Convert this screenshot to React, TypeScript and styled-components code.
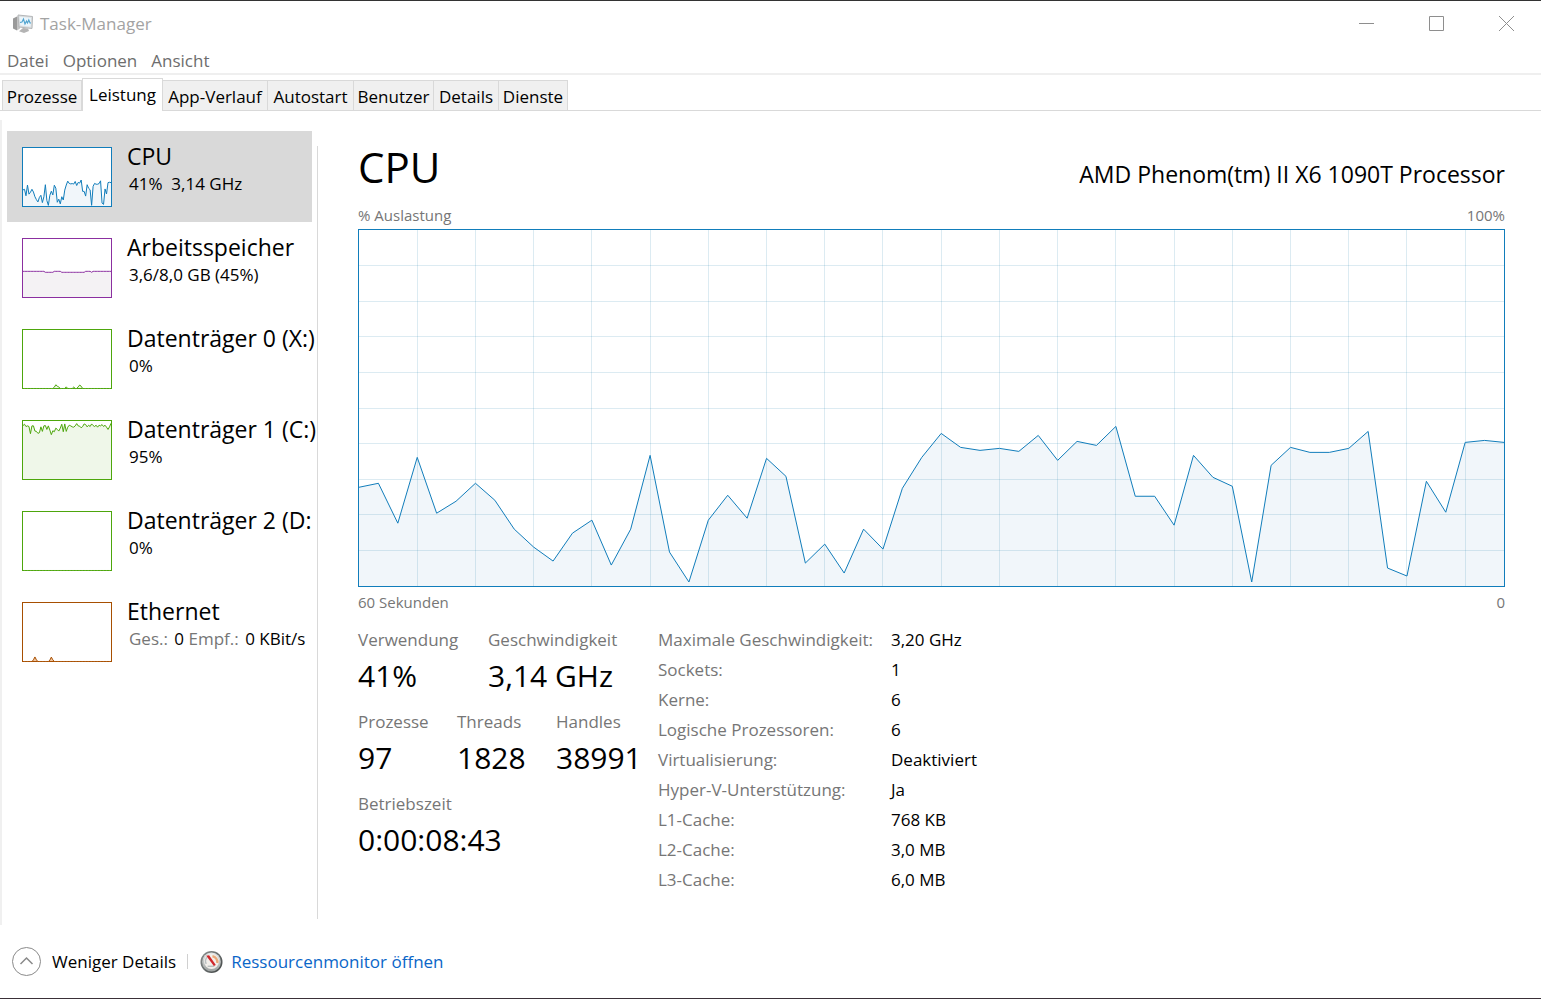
import React from "react";
import styled, { createGlobalStyle } from "styled-components";

const GlobalStyle = createGlobalStyle`
  *, *::before, *::after { box-sizing: border-box; }
  body {
    margin: 0;
    background: #fff;
    color: #000;
    font-family: "Open Sans", "Noto Sans", sans-serif;
    font-size: 17px;
  }
  button { font: inherit; color: inherit; background: none; border: 0; padding: 0; margin: 0; }
  h1, h2, p, dl, dt, dd { margin: 0; font-weight: 400; }
`;

const Window = styled.div`
  display: flex;
  flex-direction: column;
  min-height: 100vh;
  border-top: 1px solid #333;
  border-bottom: 1px solid #3a3038;
`;

const TitleBar = styled.header`
  display: flex;
  align-items: center;
  height: 45px;
  padding-left: 12px;
  gap: 6px;
  color: #a3a3a3;
`;

const WindowTitle = styled.span`
  flex: 1;
  line-height: 24px;
`;

const WindowControls = styled.div`
  display: flex;
`;

const WindowButton = styled.button`
  display: flex;
  align-items: center;
  justify-content: center;
  width: 70px;
  height: 44px;
`;

const MenuBar = styled.nav`
  display: flex;
  gap: 14px;
  height: 29px;
  padding: 2px 7px 0;
  border-bottom: 2px solid #efefef;
  color: #6d6d6d;
`;

const MenuButton = styled.button`
  line-height: 24px;
`;

const TabStrip = styled.div`
  display: flex;
  align-items: flex-end;
  height: 36px;
  padding-left: 2px;
  border-bottom: 1px solid #d9d9d9;
`;

const Tab = styled.button<{ $width: number; $active?: boolean }>`
  width: ${(p) => p.$width}px;
  height: ${(p) => (p.$active ? 33 : 30)}px;
  margin-bottom: ${(p) => (p.$active ? -1 : 0)}px;
  padding-top: ${(p) => (p.$active ? 0 : 2)}px;
  border: 1px solid #d9d9d9;
  border-bottom: 0;
  border-left-width: ${(p) => (p.$active ? 1 : 0)}px;
  background: ${(p) => (p.$active ? "#fff" : "#f0f0f0")};
  line-height: 24px;
  white-space: nowrap;
  &:first-child { border-left-width: 1px; }
`;

const Content = styled.main`
  display: flex;
  flex: 1;
  margin-top: 9px;
  border-left: 2px solid #f0f0f0;
`;

const Sidebar = styled.aside`
  flex: 0 0 316px;
  display: flex;
  padding: 11px 0 6px 5px;
`;

const DeviceList = styled.div`
  width: 305px;
`;

const Divider = styled.div`
  width: 1px;
  margin: 15px 0 0 5px;
  background: #d9d9d9;
`;

const DeviceItem = styled.button<{ $active?: boolean }>`
  display: flex;
  align-items: flex-start;
  gap: 15px;
  width: 100%;
  height: 91px;
  padding: 16px 0 0 15px;
  text-align: left;
  background: ${(p) => (p.$active ? "#d9d9d9" : "transparent")};
`;

const DeviceText = styled.span`
  display: flex;
  flex-direction: column;
  margin-top: -6px;
  white-space: nowrap;
`;

const DeviceName = styled.span`
  font-size: 23px;
  line-height: 30px;
`;

const DeviceInfo = styled.span`
  padding-left: 2px;
  font-size: 17px;
  line-height: 26px;
  white-space: pre;
`;

const Muted = styled.span`
  margin-right: 2px;
  color: #767676;
`;

const Plot = styled.span<{ $color: string; $large?: boolean }>`
  display: block;
  position: relative;
  flex: ${(p) => (p.$large ? "1 0 240px" : "none")};
  width: ${(p) => (p.$large ? "auto" : "90px")};
  height: ${(p) => (p.$large ? "auto" : "60px")};
  border: 1px solid ${(p) => p.$color};
  background: #fff;
  svg {
    position: absolute;
    inset: 0;
    width: 100%;
    height: 100%;
    display: block;
    overflow: visible;
  }
`;

const Panel = styled.section`
  flex: 1;
  display: flex;
  flex-direction: column;
  min-width: 0;
  padding: 18px 36px 30px 40px;
`;

const PanelHead = styled.div`
  display: flex;
  justify-content: space-between;
  align-items: baseline;
  height: 66px;
`;

const Heading = styled.h1`
  font-size: 42px;
  line-height: 58px;
`;

const Model = styled.h2`
  font-size: 23px;
  line-height: 30px;
`;

const AxisRow = styled.div`
  display: flex;
  justify-content: space-between;
  height: 25px;
  font-size: 15px;
  line-height: 22px;
  color: #767676;
`;

const AxisFooter = styled(AxisRow)`
  height: 38px;
  line-height: 30px;
`;

const Figures = styled.div`
  display: grid;
  grid-template-columns: 300px 1fr;
`;

const StatRows = styled.div`
  display: flex;
  flex-direction: column;
  gap: 10px;
`;

const StatRow = styled.dl<{ $column: number }>`
  display: grid;
  grid-auto-flow: column;
  grid-auto-columns: ${(p) => p.$column}px;
`;

const StatLabel = styled.dt`
  font-size: 17px;
  line-height: 30px;
  color: #767676;
`;

const StatValue = styled.dd`
  font-size: 30px;
  line-height: 42px;
  white-space: nowrap;
`;

const SpecTable = styled.table`
  border-collapse: collapse;
  justify-self: start;
  align-self: start;
  font-size: 17px;
  line-height: 30px;
  th {
    width: 233px;
    padding: 0;
    font-weight: 400;
    text-align: left;
    color: #767676;
  }
  td { padding: 0; }
`;

const Footer = styled.footer`
  display: flex;
  align-items: center;
  height: 73px;
  padding: 0 12px;
`;

const FewerButton = styled.button`
  display: flex;
  align-items: center;
  gap: 11px;
`;

const FooterRule = styled.span`
  width: 1px;
  height: 15px;
  margin: 0 12px 0 11px;
  background: #d0d0d0;
`;

const MonitorLink = styled.a`
  display: flex;
  align-items: center;
  gap: 8px;
  color: #0a66c8;
  text-decoration: none;
`;

/* Depth of each sample below the top edge, on a scale of 357. */
const cpu = [
  258, 254, 294, 228, 284, 272, 254, 271, 300, 318, 332, 304, 291, 336, 300, 226, 323, 353, 291, 266,
  289, 229, 247, 334, 315, 344, 300, 320, 259, 228, 204, 218, 221, 219, 222, 206, 231, 212, 216, 197,
  267, 267, 296, 226, 248, 257, 353, 236, 218, 223, 223, 219, 202, 339, 347, 252, 283, 213, 211, 213,
];
const memory = Array.from({ length: 60 }, (_, i) =>
  (i > 14 && i < 21) || (i > 25 && i < 42) || i === 46 ? 205 : 199
);
/* An idle device draws its line on the bottom border itself. */
const idle = Array.from({ length: 60 }, () => 360);
const spikes = (at: Record<number, number>) => idle.map((v, i) => at[i] ?? v);
const diskX = spikes({ 21: 352, 22: 337, 23: 346, 24: 351, 29: 350, 34: 351, 37: 350, 38: 339, 39: 346 });
const ethernet = spikes({ 7: 350, 8: 332, 9: 350, 18: 352, 19: 333, 20: 350 });
const diskC = [
  28, 20, 34, 30, 34, 78, 30, 30, 62, 64, 76, 72, 36, 64, 30, 28, 52, 30, 56, 84,
  60, 66, 44, 52, 62, 44, 20, 66, 18, 64, 38, 26, 30, 36, 38, 30, 16, 30, 32, 42,
  34, 18, 22, 36, 26, 34, 18, 28, 34, 26, 38, 26, 30, 22, 34, 26, 38, 52, 36, 14,
];

type GraphProps = { data: number[]; color: string; fill: string; large?: boolean };

function Graph({ data, color, fill, large }: GraphProps) {
  const line = data.map((y, x) => `${x},${y}`).join(" ");
  return (
    <Plot $color={color} $large={large}>
      <svg viewBox="0 0 59 357" preserveAspectRatio="none" aria-hidden="true">
        <polygon points={`0,357 ${line} 59,357`} fill={fill} />
        {large && (
          <g stroke="#1177aa" strokeOpacity="0.15" shapeRendering="crispEdges">
            {Array.from({ length: 19 }, (_, i) => (
              <line key={`v${i}`} x1={(i + 1) * 3} x2={(i + 1) * 3} y1="0" y2="357" vectorEffect="non-scaling-stroke" />
            ))}
            {Array.from({ length: 9 }, (_, i) => (
              <line key={`h${i}`} x1="0" x2="59" y1={(i + 1) * 35.7} y2={(i + 1) * 35.7} vectorEffect="non-scaling-stroke" />
            ))}
          </g>
        )}
        <polyline points={line} fill="none" stroke={color} strokeWidth="1" vectorEffect="non-scaling-stroke" />
      </svg>
    </Plot>
  );
}

const AppIcon = () => (
  <svg width="22" height="20" viewBox="0 0 22 20" aria-hidden="true">
    <path d="M1 4.500 5 2.500v14l-4-2z" fill="#9a9a9a" />
    <path d="M5 2.500l3-1v13l-3 2z" fill="#c4c4c4" />
    <path d="M6 1 20.500 2.500 20 14.500 7 13z" fill="#dcdedf" stroke="#b4b7b9" />
    <path d="M7.500 2.800 19 3.800 18.600 12.800 8.300 11.600z" fill="#eaf5fb" />
    <path d="M8 8.500l2-.5 1.500-3 1.500 5 1.500-3 1 2 1.300-3 1.200 3h1" fill="none" stroke="#4fa3cf" strokeWidth="1.100" />
    <path d="M11 14l5 .6 1 2.400-5 2-5-1.800z" fill="#b4b4b4" />
  </svg>
);

const GaugeIcon = () => (
  <svg width="23" height="24" viewBox="0 0 24 24" aria-hidden="true">
    <defs>
      <linearGradient id="rim" x1="0" y1="0" x2="1" y2="1">
        <stop offset="0" stopColor="#8d9291" />
        <stop offset="0.6" stopColor="#5f6464" />
        <stop offset="1" stopColor="#3c4040" />
      </linearGradient>
      <linearGradient id="bezel" x1="0" y1="0" x2="0" y2="1">
        <stop offset="0" stopColor="#e6e9e8" />
        <stop offset="1" stopColor="#9da2a1" />
      </linearGradient>
    </defs>
    <circle cx="12" cy="12" r="11.500" fill="url(#rim)" />
    <circle cx="12" cy="12" r="9.800" fill="url(#bezel)" />
    <circle cx="12" cy="11.500" r="7.800" fill="#f2eeea" />
    <path d="M6.500 14a6 6 0 0 1 1-7" fill="none" stroke="#b9bfc0" strokeWidth="1.500" />
    <path d="M13 6a6 6 0 0 1 5 7" fill="none" stroke="#e9a878" strokeWidth="2.500" />
    <path d="M8 16.500h7" stroke="#b8bdbd" strokeWidth="1.500" />
    <path d="M6.500 5.500 9.500 5l7 10-2 1.200z" fill="#d0262b" />
  </svg>
);

const tabs = [
  { label: "Prozesse", width: 80 },
  { label: "Leistung", width: 81 },
  { label: "App-Verlauf", width: 105 },
  { label: "Autostart", width: 86 },
  { label: "Benutzer", width: 80 },
  { label: "Details", width: 65 },
  { label: "Dienste", width: 69 },
];

const specs = [
  ["Maximale Geschwindigkeit:", "3,20 GHz"],
  ["Sockets:", "1"],
  ["Kerne:", "6"],
  ["Logische Prozessoren:", "6"],
  ["Virtualisierung:", "Deaktiviert"],
  ["Hyper-V-Unterstützung:", "Ja"],
  ["L1-Cache:", "768 KB"],
  ["L2-Cache:", "3,0 MB"],
  ["L3-Cache:", "6,0 MB"],
];

const statRows = [
  { column: 130, stats: [["Verwendung", "41%"], ["Geschwindigkeit", "3,14 GHz"]] },
  { column: 99, stats: [["Prozesse", "97"], ["Threads", "1828"], ["Handles", "38991"]] },
  { column: 200, stats: [["Betriebszeit", "0:00:08:43"]] },
];

const devices = [
  { name: "CPU", info: "41%  3,14 GHz", data: cpu, color: "#117dbb", fill: "#f1f6fa" },
  { name: "Arbeitsspeicher", info: "3,6/8,0 GB (45%)", data: memory, color: "#8b2fa0", fill: "#f4f2f4" },
  { name: "Datenträger 0 (X:)", info: "0%", data: diskX, color: "#4da60c", fill: "#eff7e9" },
  { name: "Datenträger 1 (C:)", info: "95%", data: diskC, color: "#4da60c", fill: "#eff7e9" },
  { name: "Datenträger 2 (D:", info: "0%", data: idle, color: "#4da60c", fill: "#eff7e9" },
  {
    name: "Ethernet",
    info: (
      <>
        <Muted>Ges.:</Muted> 0 <Muted>Empf.:</Muted> 0 KBit/s
      </>
    ),
    data: ethernet,
    color: "#a74f01",
    fill: "#f3c8a4",
  },
];

export default function App() {
  return (
    <Window>
      <GlobalStyle />
      <TitleBar>
        <AppIcon />
        <WindowTitle>Task-Manager</WindowTitle>
        <WindowControls>
          <WindowButton aria-label="Minimieren">
            <svg width="15" height="15" stroke="#8e8e8e"><path d="M0 7.500h15" /></svg>
          </WindowButton>
          <WindowButton aria-label="Maximieren">
            <svg width="15" height="15" stroke="#8e8e8e" fill="none"><path d="M.5.5h14v14H.5z" /></svg>
          </WindowButton>
          <WindowButton aria-label="Schließen">
            <svg width="15" height="15" stroke="#8e8e8e"><path d="M0 0l15 15M15 0 0 15" /></svg>
          </WindowButton>
        </WindowControls>
      </TitleBar>
      <MenuBar>
        <MenuButton>Datei</MenuButton>
        <MenuButton>Optionen</MenuButton>
        <MenuButton>Ansicht</MenuButton>
      </MenuBar>
      <TabStrip role="tablist">
        {tabs.map((t) => (
          <Tab key={t.label} role="tab" aria-selected={t.label === "Leistung"} $width={t.width} $active={t.label === "Leistung"}>
            {t.label}
          </Tab>
        ))}
      </TabStrip>
      <Content>
        <Sidebar>
          <DeviceList>
            {devices.map((d, i) => (
              <DeviceItem key={d.name} $active={i === 0}>
                <Graph data={d.data} color={d.color} fill={d.fill} />
                <DeviceText>
                  <DeviceName>{d.name}</DeviceName>
                  <DeviceInfo>{d.info}</DeviceInfo>
                </DeviceText>
              </DeviceItem>
            ))}
          </DeviceList>
          <Divider />
        </Sidebar>
        <Panel>
          <PanelHead>
            <Heading>CPU</Heading>
            <Model>AMD Phenom(tm) II X6 1090T Processor</Model>
          </PanelHead>
          <AxisRow>
            <span>% Auslastung</span>
            <span>100%</span>
          </AxisRow>
          <Graph data={cpu} color="#117dbb" fill="#f1f6fa" large />
          <AxisFooter>
            <span>60 Sekunden</span>
            <span>0</span>
          </AxisFooter>
          <Figures>
            <StatRows>
              {statRows.map((row) => (
                <StatRow key={row.column} $column={row.column}>
                  {row.stats.map(([label, value]) => (
                    <div key={label}>
                      <StatLabel>{label}</StatLabel>
                      <StatValue>{value}</StatValue>
                    </div>
                  ))}
                </StatRow>
              ))}
            </StatRows>
            <SpecTable>
              <tbody>
                {specs.map(([label, value]) => (
                  <tr key={label}>
                    <th scope="row">{label}</th>
                    <td>{value}</td>
                  </tr>
                ))}
              </tbody>
            </SpecTable>
          </Figures>
        </Panel>
      </Content>
      <Footer>
        <FewerButton>
          <svg width="29" height="29" fill="none" stroke="#8a8a8a" aria-hidden="true">
            <circle cx="14.500" cy="14.500" r="14" />
            <path d="M8.500 17l6-6 6 6" strokeWidth="1.500" />
          </svg>
          Weniger Details
        </FewerButton>
        <FooterRule />
        <MonitorLink href="#ressourcenmonitor">
          <GaugeIcon />
          Ressourcenmonitor öffnen
        </MonitorLink>
      </Footer>
    </Window>
  );
}
